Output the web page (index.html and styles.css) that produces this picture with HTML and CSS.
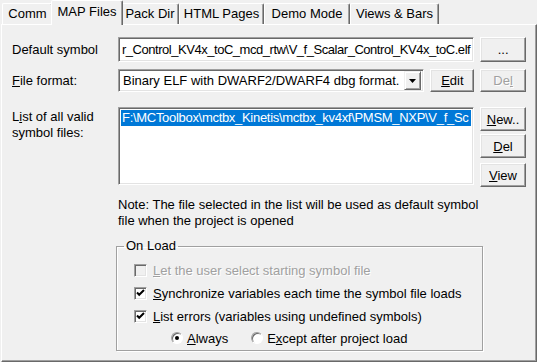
FILE: index.html
```html
<!DOCTYPE html>
<html lang="en">
<head>
    <meta charset="UTF-8">
    <title>Options - MAP Files</title>
    <link rel="stylesheet" href="styles.css">
</head>
<body>
    <div class="dialog">
        <div class="tabs">
            <div class="tab tab-comm">Comm</div>
            <div class="tab tab-map active">MAP Files</div>
            <div class="tab tab-pack">Pack Dir</div>
            <div class="tab tab-html">HTML Pages</div>
            <div class="tab tab-demo">Demo Mode</div>
            <div class="tab tab-views">Views &amp; Bars</div>
        </div>
        <div class="page">
            <div class="row row-symbol">
                <span class="label">Default symbol</span>
                <div class="edit path-edit"><span class="path-text">r_Control_KV4x_toC_mcd_rtw\V_f_Scalar_Control_KV4x_toC.elf</span></div>
                <button class="btn btn-side">...</button>
            </div>
            <div class="row row-format">
                <span class="label"><u>F</u>ile format:</span>
                <div class="edit combo">
                    <span class="combo-text">Binary ELF with DWARF2/DWARF4 dbg format.</span>
                    <span class="combo-arrow">
                        <svg width="7" height="4" viewBox="0 0 7 4"><path d="M0 0H7L3.5 4Z" fill="#000"/></svg>
                    </span>
                </div>
                <button class="btn btn-edit"><u>E</u>dit</button>
                <button class="btn btn-side" disabled>De<u>l</u></button>
            </div>
            <div class="row row-list">
                <span class="label label-top">L<u>i</u>st of all valid<br>symbol files:</span>
                <div class="edit listbox">
                    <div class="list-item selected">F:\MCToolbox\mctbx_Kinetis\mctbx_kv4xf\PMSM_NXP\V_f_Sc</div>
                </div>
                <div class="side-buttons">
                    <button class="btn btn-side"><u>N</u>ew..</button>
                    <button class="btn btn-side"><u>D</u>el</button>
                    <button class="btn btn-side btn-view"><u>V</u>iew</button>
                </div>
            </div>
            <p class="note">Note: The file selected in the list will be used as default symbol<br>file when the project is opened</p>
            <fieldset class="group">
                <legend>On Load</legend>
                <div class="check-row disabled">
                    <span class="checkbox"></span>
                    <span><u>L</u>et the user select starting symbol file</span>
                </div>
                <div class="check-row">
                    <span class="checkbox"><svg width="9" height="9" viewBox="0 0 9 9"><polyline points="1,3.5 3.2,5.8 8,1" fill="none" stroke="#000" stroke-width="2"/></svg></span>
                    <span><u>S</u>ynchronize variables each time the symbol file loads</span>
                </div>
                <div class="check-row">
                    <span class="checkbox"><svg width="9" height="9" viewBox="0 0 9 9"><polyline points="1,3.5 3.2,5.8 8,1" fill="none" stroke="#000" stroke-width="2"/></svg></span>
                    <span><u>L</u>ist errors (variables using undefined symbols)</span>
                </div>
                <div class="radio-row">
                    <span class="radio-option"><span class="radio checked"></span><span><u>A</u>lways</span></span>
                    <span class="radio-option"><span class="radio"></span><span>E<u>x</u>cept after project load</span></span>
                </div>
            </fieldset>
        </div>
    </div>
</body>
</html>
```

FILE: styles.css
```css
body {
    margin: 0;
    background-color: #f0f0f0;
    font-family: 'Liberation Sans', Arial, sans-serif;
    font-size: 13px;
    color: #000;
}
.dialog {
    width: 537px;
    height: 362px;
    overflow: hidden;
}
.tabs {
    display: flex;
    align-items: flex-end;
    height: 24px;
    padding-left: 2px;
}
.tab {
    height: 21px;
    box-sizing: border-box;
    padding: 0;
    border: 1px solid;
    border-bottom: none;
    border-color: #fff #696969 transparent #fff;
    box-shadow: inset -1px 0 #a0a0a0;
    border-radius: 2px 2px 0 0;
    line-height: 20px;
    text-align: center;
    white-space: nowrap;
}
.tab-comm { width: 51px; }
.tab-map { width: 68px; }
.tab-pack { width: 58px; }
.tab-html { width: 85px; }
.tab-demo { width: 86px; }
.tab-views { width: 89px; }
.tab.active {
    width: 72px;
    height: 25px;
    margin: 0 -2px -1px;
    background-color: #f0f0f0;
    line-height: 22px;
    z-index: 1;
}
.page {
    width: 536px;
    height: 338px;
    margin-left: 1px;
    box-sizing: border-box;
    border: 1px solid;
    border-color: #fff #696969 #696969 #fff;
    box-shadow: inset -1px -1px #a0a0a0;
    padding: 12px 10px 0 10px;
}
.row {
    display: flex;
    gap: 6px;
}
.label {
    width: 100px;
    flex: none;
    align-self: center;
    white-space: nowrap;
}
.label-top {
    align-self: flex-start;
    padding-top: 3px;
    line-height: 16px;
}
.row-format {
    margin-top: 7px;
}
.row-list {
    margin-top: 14px;
}
.edit {
    box-sizing: border-box;
    background-color: #fff;
    border: 1px solid;
    border-color: #a0a0a0 #fff #fff #a0a0a0;
    box-shadow: inset 1px 1px #696969, inset -1px -1px #e3e3e3;
    overflow: hidden;
    white-space: nowrap;
}
.path-edit {
    width: 358px;
    height: 25px;
    display: flex;
    justify-content: flex-end;
    align-items: center;
    padding: 0 3px 0 2px;
}
.path-text {
    letter-spacing: -0.46px;
}
.combo {
    width: 308px;
    height: 23px;
    display: flex;
    align-items: center;
    padding: 2px;
}
.combo-text {
    flex: 1;
    padding-left: 2px;
    overflow: hidden;
}
.combo-arrow {
    width: 17px;
    height: 19px;
    box-sizing: border-box;
    display: flex;
    align-items: center;
    justify-content: center;
    background-color: #f0f0f0;
    border: 1px solid;
    border-color: #f0f0f0 #696969 #696969 #f0f0f0;
    box-shadow: inset 1px 1px #fff, inset -1px -1px #a0a0a0;
}
.btn {
    box-sizing: border-box;
    height: 24px;
    padding: 0;
    font: inherit;
    color: #000;
    background-color: #f0f0f0;
    border: 1px solid;
    border-color: #fff #696969 #696969 #fff;
    box-shadow: inset -1px -1px #a0a0a0, inset 1px 1px #e3e3e3;
    border-radius: 0;
}
.btn:disabled {
    color: #a0a0a0;
    text-shadow: 1px 1px 0 #fff;
}
.row-symbol .btn {
    height: 25px;
}
.row-format .btn {
    height: 23px;
}
.btn-side {
    width: 46px;
}
.btn-edit {
    width: 44px;
}
.listbox {
    width: 358px;
    height: 78px;
    margin-top: 1px;
    padding: 2px;
}
.list-item {
    height: 16px;
    line-height: 16px;
    padding-left: 1px;
    overflow: hidden;
    letter-spacing: -0.3px;
}
.list-item.selected {
    background-color: #0078d7;
    color: #fff;
}
.side-buttons {
    display: flex;
    flex-direction: column;
    gap: 3px;
    margin-top: 1px;
}
.btn-view {
    margin-top: 2px;
}
.note {
    margin: 10px 0 0 106px;
    line-height: 16px;
    white-space: nowrap;
}
.group {
    width: 367px;
    box-sizing: border-box;
    margin: 9px 0 0 104px;
    padding: 5px 6px 2px 7px;
    border: 1px solid #a0a0a0;
    box-shadow: 1px 1px 0 #fff, inset 1px 1px 0 #fff;
}
.group legend {
    padding: 0 2px;
    line-height: 16px;
}
.check-row {
    display: flex;
    align-items: center;
    gap: 6px;
    height: 23px;
    padding-left: 10px;
}
.check-row.disabled {
    color: #a0a0a0;
    text-shadow: 1px 1px 0 #fff;
}
.checkbox {
    width: 13px;
    height: 13px;
    box-sizing: border-box;
    flex: none;
    display: flex;
    align-items: center;
    justify-content: center;
    background-color: #fff;
    border: 1px solid;
    border-color: #a0a0a0 #fff #fff #a0a0a0;
    box-shadow: inset 1px 1px #696969, inset -1px -1px #e3e3e3;
}
.disabled .checkbox {
    background-color: #f0f0f0;
}
.radio-row {
    display: flex;
    align-items: center;
    gap: 23px;
    height: 20px;
    padding-left: 47px;
}
.radio-option {
    display: flex;
    align-items: center;
    gap: 4px;
}
.radio {
    width: 12px;
    height: 12px;
    box-sizing: border-box;
    display: flex;
    align-items: center;
    justify-content: center;
    border-radius: 50%;
    background-color: #fff;
    border: 1px solid;
    border-color: #a0a0a0 #fff #fff #a0a0a0;
    box-shadow: inset 1px 1px #696969;
}
.radio.checked::after {
    content: '';
    width: 4px;
    height: 4px;
    border-radius: 50%;
    background-color: #000;
}
```
